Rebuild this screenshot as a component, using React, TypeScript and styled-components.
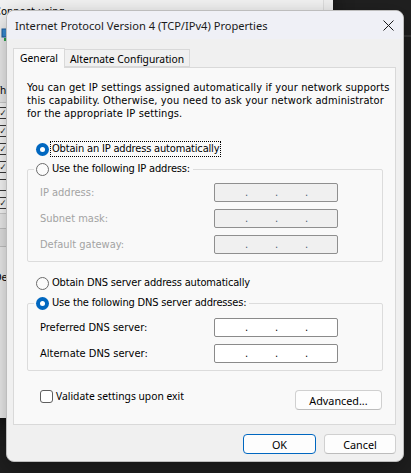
import React from "react";
import styled, { createGlobalStyle } from "styled-components";

const UI_FONT = `"Noto Sans", "Open Sans", sans-serif`;
const DLG_FONT = `"DejaVu Sans Condensed", "DejaVu Sans", "Liberation Sans", sans-serif`;

const GlobalStyle = createGlobalStyle`
  html, body {
    margin: 0;
    padding: 0;
    background: #1f1f1f;
  }
  body {
    width: 411px;
    height: 473px;
    overflow: hidden;
  }
`;

const Desktop = styled.div`
  position: relative;
  width: 411px;
  height: 473px;
  overflow: hidden;
  background: #1f1f1f;
`;

/* ---------- windows behind the dialog ---------- */

const DarkWindow = styled.div`
  position: absolute;
  left: 333px;
  top: -2px;
  width: 100px;
  height: 37px;
  background: #202020;
  border-bottom: 2px solid #343434;
`;

const BackWindow = styled.div`
  position: absolute;
  left: -14px;
  top: -14px;
  width: 347px;
  height: 432px;
  display: flex;
  background: #f3f3f3;
  box-shadow: 0 6px 18px rgba(0, 0, 0, 0.45);
`;

const BackMain = styled.div`
  flex: 1;
  display: flex;
  flex-direction: column;
  padding: 19px 0 0 8px;
  font-family: ${DLG_FONT};
  font-size: 11px;
  line-height: 13px;
  color: #000;
`;

const BackRail = styled.div`
  width: 9px;
  border-left: 1px solid #dedede;
  background: #f0f0f0;
`;

const AdapterIcon = styled.svg`
  margin: 10px 0 0 7px;
`;

const BackCaption = styled.div<{ $gap: number }>`
  margin-top: ${({ $gap }) => $gap}px;
  white-space: nowrap;
`;

const ItemList = styled.div`
  margin: 5px 0 0 -6px;
  padding: 4px 0 4px 8px;
  width: 60px;
  display: flex;
  flex-direction: column;
  gap: 6px;
  background: #fff;
  border: 1px solid #d4d4d4;
`;

const ItemBox = styled.span`
  display: flex;
  align-items: center;
  justify-content: center;
  width: 10px;
  height: 10px;
  border: 1px solid #3c3c3c;
  background: #fff;
  font-size: 9px;
  line-height: 9px;
  color: #111;
`;

const BackButton = styled.div`
  margin: 14px 0 0 -4px;
  width: 40px;
  height: 17px;
  border: 1px solid #c8c8c8;
  background: #e9e9e9;
`;

/* ---------- dialog ---------- */

const Dialog = styled.div`
  position: absolute;
  left: 6px;
  top: 10px;
  width: 398px;
  height: 452px;
  box-sizing: border-box;
  display: flex;
  flex-direction: column;
  border: 1px solid #bdbdbd;
  border-radius: 8px;
  background: #f0f0f0;
  overflow: hidden;
  box-shadow: 0 8px 24px rgba(0, 0, 0, 0.35);
`;

const TitleBar = styled.div`
  height: 29px;
  display: flex;
  align-items: center;
  justify-content: space-between;
  padding: 0 9px 0 8px;
  background: #eff0f6;
  font-family: ${UI_FONT};
  font-size: 11.1px;
  color: #1a1a1a;
`;

const CloseGlyph = styled.svg`
  display: block;
`;

const Body = styled.div`
  flex: 1;
  display: flex;
  flex-direction: column;
  padding: 8px 7px 7px 6px;
`;

const TabStrip = styled.div`
  height: 20px;
  display: flex;
  align-items: flex-end;
`;

const Tab = styled.div<{ $active?: boolean }>`
  position: relative;
  z-index: ${({ $active }) => ($active ? 1 : 0)};
  box-sizing: border-box;
  height: ${({ $active }) => ($active ? 20 : 18)}px;
  margin-bottom: ${({ $active }) => ($active ? -1 : 0)}px;
  margin-left: ${({ $active }) => ($active ? 0 : -1)}px;
  padding: ${({ $active }) => ($active ? "0 6px 1px" : "1px 5px 0")};
  display: flex;
  align-items: center;
  border: 1px solid #d9d9d9;
  border-bottom: ${({ $active }) => ($active ? "none" : "1px solid #d9d9d9")};
  background: ${({ $active }) => ($active ? "#f9f9f9" : "#f0f0f0")};
  font-family: ${UI_FONT};
  font-size: 10.3px;
  color: #000;
  white-space: nowrap;
`;

const Panel = styled.div`
  border: 1px solid #d9d9d9;
  background: #f9f9f9;
  padding: 13px 12px 14px 13px;
  font-family: ${DLG_FONT};
  font-size: 11px;
  line-height: 13px;
  color: #000;
`;

const Intro = styled.p`
  margin: 0;
  white-space: nowrap;
  letter-spacing: 0.12px;
`;

const RadioRow = styled.label<{ $gap: number }>`
  display: flex;
  align-items: center;
  gap: 2px;
  height: 16px;
  margin: ${({ $gap }) => $gap}px 0 0 9px;
  white-space: nowrap;
`;

const RadioDot = styled.span<{ $on?: boolean }>`
  box-sizing: border-box;
  width: 13px;
  height: 13px;
  flex: none;
  border-radius: 50%;
  display: flex;
  align-items: center;
  justify-content: center;
  border: ${({ $on }) => ($on ? "none" : "1px solid #6b6b6b")};
  background: ${({ $on }) => ($on ? "#0067c0" : "#fbfbfb")};

  &::after {
    content: "";
    display: ${({ $on }) => ($on ? "block" : "none")};
    width: 5px;
    height: 5px;
    border-radius: 50%;
    background: #fff;
  }
`;

const RadioText = styled.span<{ $focused?: boolean }>`
  padding: 0 1px;
  line-height: 14px;
  letter-spacing: -0.17px;
  outline: ${({ $focused }) => ($focused ? "1px dotted #000" : "none")};
`;

const Group = styled.fieldset<{ $gap: number }>`
  margin: ${({ $gap }) => $gap}px 0 0 0;
  padding: 0 0 7px 0;
  min-inline-size: 0;
  border: 1px solid #dcdcdc;
  border-radius: 2px;
`;

const GroupLegend = styled.legend`
  margin-left: 6px;
  padding: 0 2px;
`;

const LegendRow = styled.span`
  display: flex;
  align-items: center;
  gap: 2px;
  height: 16px;
  white-space: nowrap;
`;

const FieldGrid = styled.div<{ $top: number }>`
  display: grid;
  grid-template-columns: 174px 124px;
  grid-auto-rows: 19px;
  row-gap: 7px;
  align-items: center;
  padding: ${({ $top }) => $top}px 0 0 12px;
`;

const FieldLabel = styled.span<{ $disabled?: boolean }>`
  color: ${({ $disabled }) => ($disabled ? "#a3a3a3" : "#000")};
  white-space: nowrap;
`;

const IpBox = styled.div<{ $disabled?: boolean }>`
  box-sizing: border-box;
  height: 19px;
  display: flex;
  align-items: flex-end;
  padding: 0 0 3px 3px;
  border: 1px solid ${({ $disabled }) => ($disabled ? "#8f8f8f" : "#8a8a8a")};
  border-radius: 2px;
  background: ${({ $disabled }) => ($disabled ? "#f0f0f0" : "#fff")};
  color: ${({ $disabled }) => ($disabled ? "#4a5a70" : "#000")};
`;

const IpOctet = styled.span`
  width: 27px;
`;

const IpDot = styled.span`
  width: 3px;
  text-align: center;
  line-height: 11px;
`;

const Footer = styled.div`
  display: flex;
  justify-content: space-between;
  align-items: flex-start;
  margin-top: 18px;
`;

const CheckRow = styled.label`
  display: flex;
  align-items: center;
  gap: 3px;
  height: 14px;
  margin-left: 13px;
  font-family: ${UI_FONT};
  font-size: 10.3px;
  white-space: nowrap;
`;

const CheckBox = styled.span`
  box-sizing: border-box;
  width: 13px;
  height: 13px;
  border: 1px solid #5f5f5f;
  border-radius: 3px;
  background: #fff;
`;

const PushButton = styled.button<{ $width: number; $default?: boolean }>`
  box-sizing: border-box;
  width: ${({ $width }) => $width}px;
  height: 20px;
  margin: 0;
  padding: 0;
  border: 1px solid ${({ $default }) => ($default ? "#0067c0" : "#d0d0d0")};
  border-bottom-color: ${({ $default }) => ($default ? "#0067c0" : "#bcbcbc")};
  border-radius: 4px;
  background: #fdfdfd;
  font-family: ${UI_FONT};
  font-size: 10.8px;
  color: #000;
`;

const AdvancedButton = styled(PushButton)`
  margin: 1px 1px 0 0;
`;

const ButtonRow = styled.div`
  display: flex;
  justify-content: flex-end;
  gap: 8px;
  margin-top: 9px;
`;

function IpField({ disabled }: { disabled?: boolean }) {
  return (
    <IpBox $disabled={disabled}>
      <IpOctet />
      <IpDot>.</IpDot>
      <IpOctet />
      <IpDot>.</IpDot>
      <IpOctet />
      <IpDot>.</IpDot>
      <IpOctet />
    </IpBox>
  );
}

function Radio({
  on,
  focused,
  children,
}: {
  on?: boolean;
  focused?: boolean;
  children: React.ReactNode;
}) {
  return (
    <>
      <RadioDot $on={on} />
      <RadioText $focused={focused}>{children}</RadioText>
    </>
  );
}

export default function App() {
  return (
    <Desktop>
      <GlobalStyle />
      <DarkWindow />
      <BackWindow>
        <BackMain>
          <BackCaption $gap={0}>Connect using:</BackCaption>
          <AdapterIcon width="14" height="13" viewBox="0 0 14 13">
            <rect x="1" y="1" width="11" height="8" fill="#3b8fd8" stroke="#1f5e9e" />
            <rect x="3" y="10" width="7" height="3" fill="#2fa84f" />
          </AdapterIcon>
          <BackCaption $gap={43}>This connection uses the following items:</BackCaption>
          <ItemList>
            <ItemBox>✓</ItemBox>
            <ItemBox>✓</ItemBox>
            <ItemBox>✓</ItemBox>
            <ItemBox>✓</ItemBox>
            <ItemBox />
            <ItemBox>✓</ItemBox>
          </ItemList>
          <BackButton />
          <BackCaption $gap={24}>Description</BackCaption>
        </BackMain>
        <BackRail />
      </BackWindow>

      <Dialog>
        <TitleBar>
          <span>Internet Protocol Version 4 (TCP/IPv4) Properties</span>
          <CloseGlyph width="11" height="11" viewBox="0 0 11 11">
            <path d="M0.5 0.5 L10.5 10.5 M10.5 0.5 L0.5 10.5" stroke="#1a1a1a" strokeWidth="1" />
          </CloseGlyph>
        </TitleBar>

        <Body>
          <TabStrip>
            <Tab $active>General</Tab>
            <Tab>Alternate Configuration</Tab>
          </TabStrip>

          <Panel>
            <Intro>
              You can get IP settings assigned automatically if your network supports
              <br />
              this capability. Otherwise, you need to ask your network administrator
              <br />
              for the appropriate IP settings.
            </Intro>

            <RadioRow $gap={21}>
              <Radio on focused>
                Obtain an IP address automatically
              </Radio>
            </RadioRow>

            <Group $gap={4}>
              <GroupLegend>
                <LegendRow>
                  <Radio>Use the following IP address:</Radio>
                </LegendRow>
              </GroupLegend>
              <FieldGrid $top={6}>
                <FieldLabel $disabled>IP address:</FieldLabel>
                <IpField disabled />
                <FieldLabel $disabled>Subnet mask:</FieldLabel>
                <IpField disabled />
                <FieldLabel $disabled>Default gateway:</FieldLabel>
                <IpField disabled />
              </FieldGrid>
            </Group>

            <RadioRow $gap={13}>
              <Radio>Obtain DNS server address automatically</Radio>
            </RadioRow>

            <Group $gap={4}>
              <GroupLegend>
                <LegendRow>
                  <Radio on>Use the following DNS server addresses:</Radio>
                </LegendRow>
              </GroupLegend>
              <FieldGrid $top={7}>
                <FieldLabel>Preferred DNS server:</FieldLabel>
                <IpField />
                <FieldLabel>Alternate DNS server:</FieldLabel>
                <IpField />
              </FieldGrid>
            </Group>

            <Footer>
              <CheckRow>
                <CheckBox />
                Validate settings upon exit
              </CheckRow>
              <AdvancedButton $width={87}>Advanced...</AdvancedButton>
            </Footer>
          </Panel>

          <ButtonRow>
            <PushButton $width={73} $default>
              OK
            </PushButton>
            <PushButton $width={72}>Cancel</PushButton>
          </ButtonRow>
        </Body>
      </Dialog>
    </Desktop>
  );
}
